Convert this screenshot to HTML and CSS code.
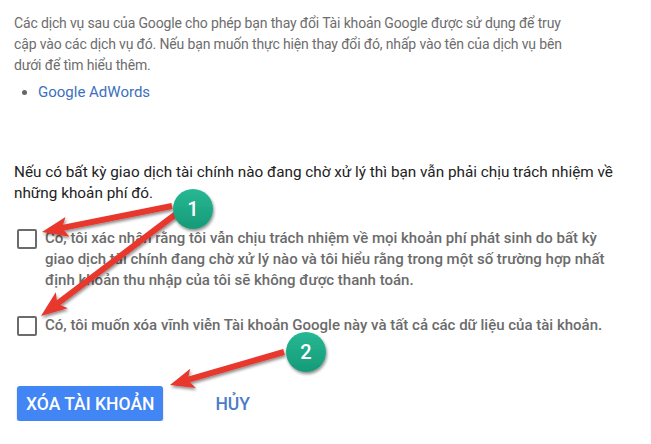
FILE: index.html
```html
<!DOCTYPE html>
<html lang="vi">
<head>
  <meta charset="UTF-8">
  <meta name="viewport" content="width=device-width, initial-scale=1.0">
  <title>Xóa Tài khoản Google</title>
  <link rel="stylesheet" href="styles.css">
</head>
<body>
  <div class="page">
    <p class="intro">Các dịch vụ sau của Google cho phép bạn thay đổi Tài khoản Google được sử dụng để truy<br>cập vào các dịch vụ đó. Nếu bạn muốn thực hiện thay đổi đó, nhấp vào tên của dịch vụ bên<br>dưới để tìm hiểu thêm.</p>
    <ul class="services">
      <li><a href="#">Google AdWords</a></li>
    </ul>

    <p class="notice">Nếu có bất kỳ giao dịch tài chính nào đang chờ xử lý thì bạn vẫn phải chịu trách nhiệm về những khoản phí đó.</p>

    <label class="confirm">
      <input type="checkbox">
      <span class="box"></span>
      <span class="label-text">Có, tôi xác nhận rằng tôi vẫn chịu trách nhiệm về mọi khoản phí phát sinh do bất kỳ giao dịch tài chính đang chờ xử lý nào và tôi hiểu rằng trong một số trường hợp nhất định khoản thu nhập của tôi sẽ không được thanh toán.</span>
    </label>
    <label class="confirm">
      <input type="checkbox">
      <span class="box"></span>
      <span class="label-text">Có, tôi muốn xóa vĩnh viễn Tài khoản Google này và tất cả các dữ liệu của tài khoản.</span>
    </label>

    <div class="actions">
      <button class="btn-primary">XÓA TÀI KHOẢN</button>
      <button class="btn-flat">HỦY</button>
    </div>
  </div>

  <!-- step markers and arrows drawn on top of the form -->
  <svg class="marks" width="651" height="444" viewBox="0 0 651 444">
    <defs>
      <filter id="shadow" x="-20%" y="-20%" width="140%" height="140%">
        <feDropShadow dx="1" dy="2" stdDeviation="1.5" flood-color="#000" flood-opacity="0.45"/>
      </filter>
      <linearGradient id="badge" x1="0" y1="0" x2="0" y2="1">
        <stop offset="0" stop-color="#27b893"/>
        <stop offset="1" stop-color="#169a77"/>
      </linearGradient>
    </defs>
    <g fill="#e8372d" filter="url(#shadow)">
      <!-- arrow to first checkbox -->
      <polygon points="171.4,203.1 63,224.8 65.5,217.1 42,232 69.5,236.7 64.2,230.6 172.6,208.9"/>
      <!-- arrow to second checkbox -->
      <polygon points="174.2,211.6 56.8,300.3 55.8,292.3 41,316 67.8,308.3 60.4,305.1 177.8,216.4"/>
      <!-- arrow to delete button -->
      <polygon points="283.2,349.1 188.4,376.5 190.2,368.7 170,385 195.8,387.9 190,382.3 284.8,354.9"/>
    </g>
    <g filter="url(#shadow)">
      <circle cx="193" cy="209" r="20" fill="url(#badge)"/>
      <circle cx="306" cy="352" r="20" fill="url(#badge)"/>
    </g>
    <text x="193" y="216" class="badge-num">1</text>
    <text x="306" y="359" class="badge-num">2</text>
  </svg>
</body>
</html>
```

FILE: styles.css
```css
body {
  margin: 0;
  background: #ffffff;
  font-family: Roboto, "Noto Sans", Arial, sans-serif;
  color: #333333;
}
.page {
  padding: 13px 14px 0 14px;
  width: 612px;
}
p {
  margin: 0;
  font-size: 15px;
  line-height: 21px;
}
.intro {
  font-size: 14px;
  letter-spacing: -0.15px;
  color: #6d6d6d;
  white-space: nowrap;
}
.services {
  margin: 6px 0 0 0;
  padding-left: 24px;
  font-size: 15px;
  line-height: 21px;
  color: #666666;
}
.services a {
  color: #3d6fc0;
  text-decoration: none;
}
.notice {
  margin-top: 59px;
  font-size: 15.3px;
  color: #222222;
}
.confirm {
  display: flex;
  align-items: flex-start;
  gap: 8px;
  margin-top: 24px;
  padding-left: 3px;
}
.confirm input {
  display: none;
}
.box {
  flex: none;
  width: 16px;
  height: 16px;
  margin-top: 1px;
  border: 2px solid #6b6b6b;
  border-radius: 2px;
}
.label-text {
  font-size: 15px;
  line-height: 21px;
  font-weight: 500;
  color: #6b6b6b;
}
.actions {
  display: flex;
  align-items: center;
  gap: 38px;
  margin-top: 50px;
  padding-left: 3px;
}
.btn-primary {
  font-family: inherit;
  font-size: 17.5px;
  font-weight: 500;
  color: #ffffff;
  background: #4285f4;
  border: none;
  border-radius: 3px;
  padding: 0 9px;
  height: 35px;
  box-shadow: 0 1px 2px rgba(0, 0, 0, 0.25);
}
.btn-flat {
  font-family: inherit;
  font-size: 17.5px;
  font-weight: 500;
  color: #4a7cc9;
  background: none;
  border: none;
  padding: 0 14px;
}
.marks {
  position: absolute;
  left: 0;
  top: 0;
  pointer-events: none;
}
.badge-num {
  font-family: Roboto, Arial, sans-serif;
  font-size: 20px;
  font-weight: 500;
  fill: #ffffff;
  text-anchor: middle;
}
```
